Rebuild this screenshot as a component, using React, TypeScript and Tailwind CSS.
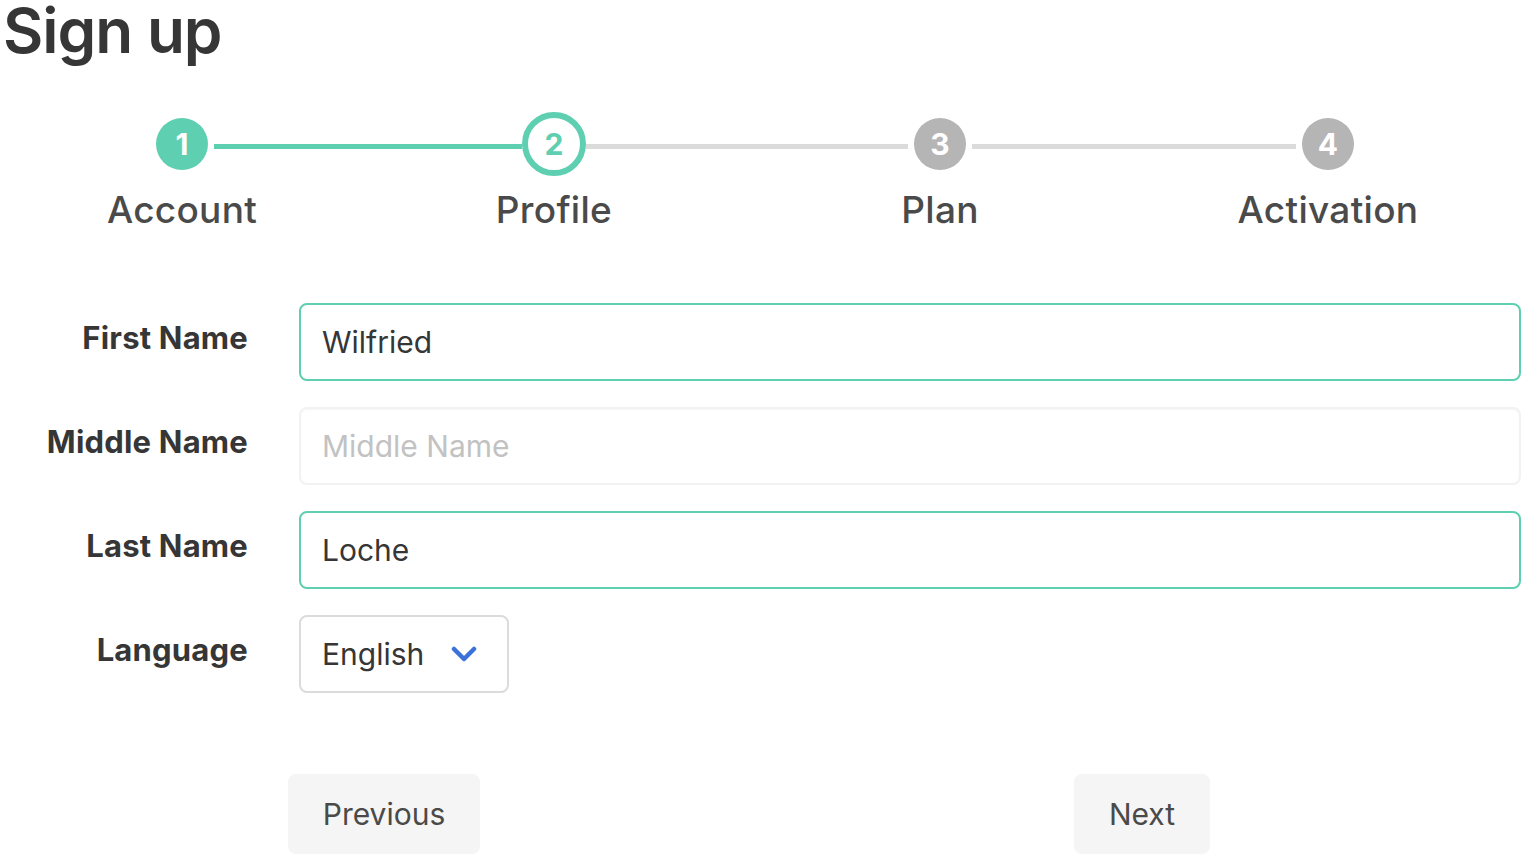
import { Fragment } from 'react';

const steps = [
  { n: 1, label: 'Account', state: 'done' },
  { n: 2, label: 'Profile', state: 'active' },
  { n: 3, label: 'Plan', state: 'todo' },
  { n: 4, label: 'Activation', state: 'todo' },
];

// line widths between circles (px)
const lines = [
  { w: 'w-[308px] ml-[6px] bg-[#5fcfb1]' },
  { w: 'w-[322px] mr-[6px] bg-[#dbdbdb]' },
  { w: 'w-[324px] mx-[6px] bg-[#dbdbdb]' },
];

function StepCircle({ n, state }: { n: number; state: string }) {
  if (state === 'active') {
    return (
      <div className="w-[64px] h-[64px] rounded-full border-[6px] border-[#5fcfb1] bg-white flex items-center justify-center text-[#5fcfb1] text-[30px] font-bold leading-none shrink-0">
        {n}
      </div>
    );
  }
  const bg = state === 'done' ? 'bg-[#5fcfb1]' : 'bg-[#b5b5b5]';
  return (
    <div className={`w-[52px] h-[52px] rounded-full ${bg} flex items-center justify-center text-white text-[30px] font-bold leading-none shrink-0`}>
      {n}
    </div>
  );
}

function Label({ children }: { children: string }) {
  return (
    <div className="w-[248px] shrink-0 text-right pt-[20px] text-[31px] leading-[30px] font-bold tracking-[0.2px] text-[#363636]">
      {children}
    </div>
  );
}

function Field({ label, value, placeholder }: { label: string; value?: string; placeholder?: string }) {
  const filled = !!value;
  return (
    <div className="flex">
      <Label>{label}</Label>
      <div className="ml-[51px] w-[1222px]">
        <div
          className={`h-[78px] rounded-[8px] border-2 flex items-center pl-[21px] text-[30px] ${
            filled ? 'border-[#5fcfb1] text-[#363636]' : 'border-[#f2f2f2] shadow-[inset_0_1px_2px_rgba(10,10,10,0.04)] text-[#c2c2c2]'
          }`}
        >
          {value || placeholder}
        </div>
      </div>
    </div>
  );
}

export default function App() {
  return (
    <div className="w-[1540px] h-[868px] bg-white overflow-hidden text-[#363636]" style={{ fontFamily: 'Inter, "Noto Sans", sans-serif' }}>
      <h1 className="pl-[3px] text-[62px] leading-[62px] font-semibold tracking-[-1px] text-[#363636]">Sign up</h1>

      {/* Stepper */}
      <div className="mt-[56px] ml-[156px] flex items-center h-[52px]">
        {steps.map((s, i) => (
          <Fragment key={s.n}>
            <StepCircle n={s.n} state={s.state} />
            {i < lines.length && <div className={`h-[5px] mt-[5px] ${lines[i].w}`} />}
          </Fragment>
        ))}
      </div>
      <div className="flex mt-[20px] text-[37px] leading-[40px] font-medium tracking-[0.3px] text-[#4a4a4a]">
        <div className="ml-[82px] w-[200px] text-center">Account</div>
        <div className="ml-[172px] w-[200px] text-center">Profile</div>
        <div className="ml-[186px] w-[200px] text-center">Plan</div>
        <div className="ml-[188px] w-[200px] text-center">Activation</div>
      </div>

      {/* Form */}
      <div className="mt-[73px] flex flex-col gap-[26px]">
        <Field label="First Name" value="Wilfried" />
        <Field label="Middle Name" placeholder="Middle Name" />
        <Field label="Last Name" value="Loche" />
        <div className="flex">
          <Label>Language</Label>
          <div className="ml-[51px] w-[210px] h-[78px] rounded-[8px] border-2 border-[#dbdbdb] flex items-center pl-[21px] text-[30px] text-[#363636]">
            English
            <svg className="ml-[27px]" width="26" height="20" viewBox="0 0 26 20" fill="none">
              <polyline points="3,5 13,15 23,5" stroke="#3b71d8" strokeWidth="4.5" strokeLinecap="round" strokeLinejoin="round" />
            </svg>
          </div>
        </div>
      </div>

      {/* Buttons */}
      <div className="mt-[81px] flex">
        <button className="ml-[288px] w-[192px] h-[80px] rounded-[8px] bg-[#f5f5f5] text-[30px] text-[#4a4a4a]">Previous</button>
        <button className="ml-[594px] w-[136px] h-[80px] rounded-[8px] bg-[#f5f5f5] text-[30px] text-[#4a4a4a]">Next</button>
      </div>
    </div>
  );
}
